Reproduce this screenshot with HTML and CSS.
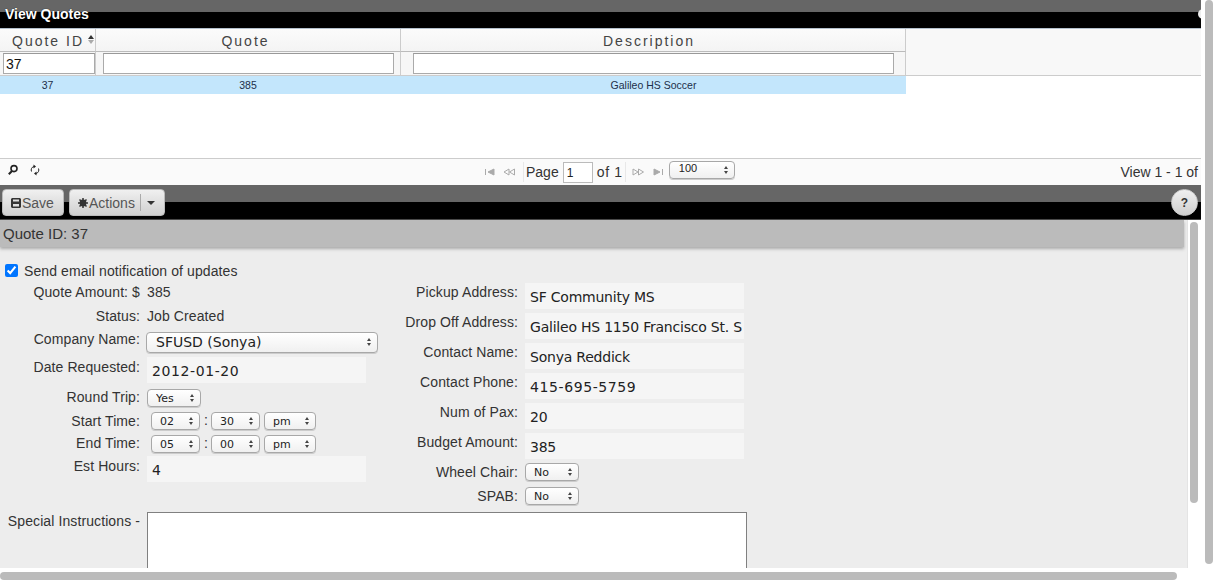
FILE: index.html
```html
<!DOCTYPE html>
<html lang="en">
<head>
    <meta charset="UTF-8">
    <title>View Quotes</title>
    <link rel="stylesheet" href="styles.css">
</head>
<body>
<div class="page">
    <div class="titlebar"><b>View Quotes</b><i class="close"></i></div>

    <div class="grid-head">
        <div class="cols">
            <div class="col c1 sorted">Quote ID<span class="sort"></span></div>
            <div class="col c2">Quote</div>
            <div class="col c3">Description</div>
        </div>
        <div class="cols filters">
            <div class="col c1"><input class="filter f1" type="text" value="37"></div>
            <div class="col c2"><input class="filter f2" type="text"></div>
            <div class="col c3"><input class="filter f3" type="text"></div>
        </div>
    </div>
    <div class="grid-body">
        <div class="grid-row">
            <div class="cell c1">37</div>
            <div class="cell c2">385</div>
            <div class="cell c3">Galileo HS Soccer</div>
        </div>
    </div>

    <div class="pager">
        <div class="pager-left">
            <svg class="ico" width="12" height="12" viewBox="0 0 12 12"><circle cx="7" cy="4.6" r="3" fill="none" stroke="#222" stroke-width="1.6"/><path d="M5 7 1.8 10.2" stroke="#222" stroke-width="2"/></svg>
            <svg class="ico" width="12" height="12" viewBox="0 0 12 12"><path d="M2.5 7.5A3.6 3.6 0 0 1 5 2.5M9.5 4.5A3.6 3.6 0 0 1 7 9.5" fill="none" stroke="#222"/><path d="M4.5 0.5 7 2.5 4.5 4.5zM7.5 7.5 5 9.5 7.5 11.5z" fill="#222"/></svg>
        </div>
        <div class="pager-mid">
            <svg class="pg p1" width="12" height="8" viewBox="0 0 12 8"><path d="M1.5 1v6M10 1v6L4 4z" fill="#aaa" stroke="#aaa"/></svg>
            <svg class="pg p2" width="12" height="8" viewBox="0 0 12 8"><path d="M6 1v6L1 4zM11.500 1v6L6.500 4z" fill="none" stroke="#aaa"/></svg>
            <span class="sep"></span>
            <span class="page-lbl">Page</span>
            <input class="page-num" type="text" value="1">
            <span class="page-of">of 1</span>
            <span class="sep sep-end"></span>
            <svg class="pg p3" width="12" height="8" viewBox="0 0 12 8"><path d="M1 1v6L6 4zM6.500 1v6L11.500 4z" fill="none" stroke="#aaa"/></svg>
            <svg class="pg p4" width="12" height="8" viewBox="0 0 12 8"><path d="M2 1v6L8 4zM10.500 1v6" fill="#aaa" stroke="#aaa"/></svg>
            <span class="sel sel-pager"><select><option>100</option></select></span>
        </div>
        <div class="pager-right">View 1 - 1 of</div>
    </div>

    <div class="toolbar">
        <button class="btn btn-save" type="button">
            <svg width="10" height="10" viewBox="0 0 10 10"><path d="M1 0h8l1 1v8l-1 1H1L0 9V1z" fill="#333"/><path d="M2 1.500h6v2H2zM2 6h6v2.500H2z" fill="#ddd"/></svg>Save
        </button>
        <button class="btn btn-actions" type="button">
            <svg width="10" height="10" viewBox="0 0 10 10"><circle cx="5" cy="5" r="3.400" fill="#333"/><path d="M5 0v10M0 5h10M1.500 1.500l7 7M8.500 1.500l-7 7" stroke="#333" stroke-width="1.500"/></svg>Actions<span class="divider"></span><span class="caret"></span>
        </button>
        <button class="btn-help" type="button">?</button>
    </div>

    <div class="main">
        <div class="section-head">Quote ID: 37</div>
        <form class="form">
            <div class="columns">
                <div class="left">
                    <label class="notify"><input type="checkbox" checked>Send email notification of updates</label>
                    <div class="row"><span class="lbl">Quote Amount: $</span><span class="val">385</span></div>
                    <div class="row"><span class="lbl">Status:</span><span class="val">Job Created</span></div>
                    <div class="row"><span class="lbl up1">Company Name:</span><span class="sel sel-company"><select><option>SFUSD (Sonya)</option></select></span></div>
                    <div class="row"><span class="lbl dn1">Date Requested:</span><input class="field field-num" type="text" value="2012-01-20"></div>
                    <div class="row"><span class="lbl up1">Round Trip:</span><span class="sel sel-short"><select><option>Yes</option></select></span></div>
                    <div class="row"><span class="lbl">Start Time:</span>
                        <span class="times">
                            <span class="sel sel-time"><select><option>02</option></select></span><span class="colon">:</span>
                            <span class="sel sel-time"><select><option>30</option></select></span>
                            <span class="sel sel-ampm"><select><option>pm</option></select></span>
                        </span>
                    </div>
                    <div class="row"><span class="lbl up1">End Time:</span>
                        <span class="times">
                            <span class="sel sel-time"><select><option>05</option></select></span><span class="colon">:</span>
                            <span class="sel sel-time"><select><option>00</option></select></span>
                            <span class="sel sel-ampm"><select><option>pm</option></select></span>
                        </span>
                    </div>
                    <div class="row"><span class="lbl dn1">Est Hours:</span><input class="field" type="text" value="4"></div>
                </div>
                <div class="right">
                    <div class="row"><span class="lbl">Pickup Address:</span><input class="field" type="text" value="SF Community MS"></div>
                    <div class="row"><span class="lbl">Drop Off Address:</span><input class="field" type="text" value="Galileo HS 1150 Francisco St. San Francisco"></div>
                    <div class="row"><span class="lbl">Contact Name:</span><input class="field" type="text" value="Sonya Reddick"></div>
                    <div class="row"><span class="lbl">Contact Phone:</span><input class="field field-num" type="text" value="415-695-5759"></div>
                    <div class="row"><span class="lbl">Num of Pax:</span><input class="field" type="text" value="20"></div>
                    <div class="row"><span class="lbl">Budget Amount:</span><input class="field" type="text" value="385"></div>
                    <div class="row"><span class="lbl">Wheel Chair:</span><span class="sel sel-short"><select><option>No</option></select></span></div>
                    <div class="row"><span class="lbl">SPAB:</span><span class="sel sel-short"><select><option>No</option></select></span></div>
                </div>
            </div>
            <div class="special">
                <span class="lbl">Special Instructions -</span>
                <textarea class="notes"></textarea>
            </div>
        </form>
    </div>

    <div class="scroll inner-v"></div>
</div>
<div class="scroll outer-v"></div>
<div class="scroll outer-h"></div>
</body>
</html>
```

FILE: styles.css
```css
html, body {
    margin: 0;
    height: 100%;
    overflow: hidden;
    background-color: #fff;
}

body {
    position: relative;
    font-family: "Liberation Sans", Arial, sans-serif;
    font-size: 14px;
    color: #333;
}

.page {
    position: relative;
    width: 1201px;
    height: 582px;
    display: flex;
    flex-direction: column;
    overflow: hidden;
}

/* top title bar */
.titlebar {
    flex: 0 0 29px;
    position: relative;
    box-sizing: border-box;
    padding: 5px 0 0 5px;
    background: linear-gradient(#666 12px, #000 12px);
    border-bottom: 1px solid #b4c0cc;
    color: #fff;
    line-height: 18px;
}

.titlebar b {
    font-size: 14px;
    text-shadow: 0 0 1px #000;
}

.close {
    position: absolute;
    left: 1198px;
    top: 9px;
    width: 10px;
    height: 10px;
    border-radius: 50%;
    background-color: #eee;
}

/* grid */
.grid-head {
    flex: 0 0 47px;
    background-color: #f8f8f8;
    box-sizing: border-box;
    border-bottom: 1px solid #ccc;
}

.cols {
    display: flex;
    height: 23px;
}

.filters {
    height: 23px;
}

.col {
    box-sizing: border-box;
    position: relative;
    height: 100%;
    border-right: 1px solid #ccc;
    border-bottom: 1px solid #bbb;
    text-align: center;
    line-height: 25px;
    font-size: 14px;
    letter-spacing: 2px;
    color: #444;
    background: linear-gradient(#fbfbfb, #f4f4f4);
}

.filters .col {
    border-bottom: 0;
    background: #f6f6f6;
}

.c1 { width: 96px; }
.c2 { width: 305px; padding-right: 5px; }
.c3 { width: 505px; padding-right: 8px; }

.filters .c2, .filters .c3 { padding-right: 0; }

.sorted {
    text-align: left;
    padding-left: 12px;
}

.sort {
    position: absolute;
    left: 88px;
    top: 6px;
    border-left: 3px solid transparent;
    border-right: 3px solid transparent;
    border-bottom: 4px solid #333;
}

.sort:after {
    content: "";
    position: absolute;
    left: -3px;
    top: 5px;
    border-left: 3px solid transparent;
    border-right: 3px solid transparent;
    border-top: 4px solid #aaa;
}

.filter {
    position: absolute;
    top: 1px;
    box-sizing: border-box;
    height: 21px;
    margin: 0;
    padding: 0 2px;
    border: 1px solid #aaa;
    border-top-color: #999;
    background-color: #fff;
    font-family: "Liberation Sans", Arial, sans-serif;
    font-size: 14px;
    color: #111;
}

.f1 { left: 3px; width: 92px; }
.f2 { left: 7px; width: 291px; }
.f3 { left: 12px; width: 481px; }

.grid-body {
    flex: 0 0 82px;
    background-color: #fff;
}

.grid-row {
    display: flex;
    width: 906px;
    height: 18px;
    background-color: #c3e6fc;
}

.cell {
    box-sizing: border-box;
    text-align: center;
    line-height: 19px;
    font-size: 10.5px;
    color: #1d2f4a;
    padding-right: 1px;
}

.cell.c3 { padding-right: 0; }

/* pager */
.pager {
    flex: 0 0 27px;
    box-sizing: border-box;
    display: grid;
    grid-template-columns: 484px 280px 1fr;
    border-top: 1px solid #ccc;
    background-color: #fafafa;
}

.pager-left {
    display: flex;
    align-items: center;
    gap: 10px;
    padding: 0 0 5px 7px;
}

.pager-mid {
    display: flex;
    align-items: center;
    padding-bottom: 1px;
    white-space: nowrap;
}

.pg { flex: none; }
.p1 { margin-left: 0; }
.p2 { margin-left: 7px; }
.p3 { margin-left: 4px; }
.p4 { margin-left: 8px; }

.sep {
    width: 1px;
    height: 20px;
    margin: 0 2px 0 8px;
    background-color: #e8e8e8;
}

.sep-end { margin-left: 2px; }

.page-lbl { font-size: 14px; }

.page-of { letter-spacing: 0.7px; }

.page-num {
    box-sizing: border-box;
    flex: none;
    width: 30px;
    height: 21px;
    margin: 1px 4px 0;
    padding: 2px 0 0 3px;
    border: 1px solid #bbb;
    background-color: #fff;
    font-family: "Liberation Sans", Arial, sans-serif;
    font-size: 12px;
    color: #222;
}

.pager-right {
    text-align: right;
    padding: 5px 3px 0 0;
    color: #333;
}

/* native looking select */
.sel {
    position: relative;
    display: inline-block;
    box-sizing: border-box;
    flex: none;
    height: 18px;
    vertical-align: top;
}

.sel select {
    -webkit-appearance: none;
    appearance: none;
    display: block;
    box-sizing: border-box;
    width: 100%;
    height: 100%;
    margin: 0;
    padding: 0 0 0 8px;
    border: 1px solid #a8a8a8;
    border-radius: 4px;
    background: linear-gradient(#fff, #f0f0f0);
    box-shadow: 0 1px 0 #ccc;
    font-family: "DejaVu Sans", sans-serif;
    font-size: 11px;
    color: #222;
}

.sel:before, .sel:after {
    content: "";
    position: absolute;
    right: 7px;
    border-left: 2.500px solid transparent;
    border-right: 2.500px solid transparent;
    pointer-events: none;
}

.sel:before {
    top: 5px;
    border-bottom: 3px solid #444;
}

.sel:after {
    top: 10px;
    border-top: 3px solid #444;
}

.sel-pager {
    width: 66px;
    margin: -4px 0 0 5px;
}

.sel-pager select {
    padding-left: 9px;
    padding-bottom: 3px;
    font-family: "Liberation Sans", Arial, sans-serif;
}

.sel-company {
    width: 232px;
    height: 21px;
    margin: 1px 0 0 -1px;
}

.sel-company select {
    font-size: 14px;
    padding: 0 0 2px 9px;
}

.sel-company:before { top: 6px; }
.sel-company:after { top: 11px; }

.sel-short { width: 54px; }
.sel-time { width: 49px; }
.sel-ampm { width: 52px; }

/* buttons bar */
.toolbar {
    flex: 0 0 35px;
    box-sizing: border-box;
    position: relative;
    display: flex;
    padding: 4px 0 0 2px;
    background: linear-gradient(#666 17px, #000 17px);
    border-bottom: 1px solid #444;
}

.btn {
    display: flex;
    align-items: center;
    box-sizing: border-box;
    height: 27px;
    margin: 0 5px 0 0;
    padding: 0 0 0 8px;
    border: 1px solid #bbb;
    border-radius: 4px;
    background: linear-gradient(#f0f0f0, #d0d0d0);
    font-family: "Liberation Sans", Arial, sans-serif;
    font-size: 14px;
    color: #555;
}

.btn svg { margin-right: 1px; }
.btn-save { width: 62px; }
.btn-actions { width: 96px; }

.divider {
    width: 1px;
    height: 17px;
    margin-left: 5px;
    background-color: #aaa;
}

.caret {
    margin-left: 6px;
    border-left: 4px solid transparent;
    border-right: 4px solid transparent;
    border-top: 4px solid #333;
}

.btn-help {
    position: absolute;
    left: 1171px;
    top: 4px;
    width: 27px;
    height: 27px;
    padding: 0;
    border: 1px solid #ccc;
    border-radius: 50%;
    background: linear-gradient(#f0f0f0, #cfcfcf);
    font-family: "Liberation Sans", Arial, sans-serif;
    font-size: 12px;
    font-weight: bold;
    color: #333;
}

/* quote form */
.main {
    flex: 0 0 348px;
    box-sizing: border-box;
    width: 1188px;
    position: relative;
    background-color: #ededed;
    border-right: 1px solid #e4e4e4;
}

.section-head {
    box-sizing: border-box;
    width: 1184px;
    height: 27px;
    padding: 5px 0 0 3px;
    background-color: #bbb;
    box-shadow: 0 2px 3px #aaa;
    font-size: 15px;
    line-height: 18px;
    color: #333;
}

.form {
    height: 321px;
    overflow: hidden;
    letter-spacing: 0.1px;
}

.columns {
    display: grid;
    grid-template-columns: 378px 1fr;
}

.left {
    display: grid;
    grid-template-rows: 21px 24px 24px 26px 32px 23px 23px 21px 56px;
    padding-top: 15px;
}

.right {
    display: grid;
    grid-template-rows: repeat(6, 30px) 24px 24px;
    padding-top: 36px;
}

.row {
    display: flex;
    align-items: flex-start;
    gap: 7px;
}

.lbl {
    flex: none;
    line-height: 18px;
    text-align: right;
    color: #333;
}

.left .lbl { width: 140px; }
.right .lbl { width: 140px; }

.up1 { margin-top: -1px; }
.dn1 { margin-top: 1px; }

.val {
    line-height: 18px;
    color: #333;
}

.notify {
    display: flex;
    align-items: center;
    height: 19px;
    padding: 0 0 2px 5px;
    box-sizing: border-box;
}

.notify input {
    width: 13px;
    height: 13px;
    margin: 0 6px 0 0;
}

.field {
    box-sizing: border-box;
    width: 219px;
    height: 26px;
    margin: 0;
    padding: 2px 2px 0 5px;
    border: 0;
    background-color: #f5f5f5;
    font-family: "DejaVu Sans", sans-serif;
    font-size: 14px;
    letter-spacing: -0.22px;
    color: #222;
}

.field-num { letter-spacing: 0.6px; }

.times {
    display: flex;
    gap: 4px;
    margin-left: 4px;
}

.colon {
    line-height: 17px;
    margin-right: -1px;
}

.special {
    display: flex;
    align-items: flex-start;
    gap: 7px;
}

.special .lbl {
    width: 140px;
    margin-top: 0;
}

.notes {
    display: block;
    box-sizing: border-box;
    width: 600px;
    height: 120px;
    margin: 0;
    border: 1px solid #808080;
    background-color: #fff;
}

/* scroll bars */
.scroll {
    position: absolute;
    background-color: #bbb;
    border-radius: 4px;
}

.inner-v {
    left: 1190px;
    top: 222px;
    width: 8px;
    height: 281px;
}

.outer-v {
    left: 1205px;
    top: 0;
    width: 8px;
    height: 564px;
}

.outer-h {
    left: 0;
    top: 572px;
    width: 1177px;
    height: 8px;
}
```
